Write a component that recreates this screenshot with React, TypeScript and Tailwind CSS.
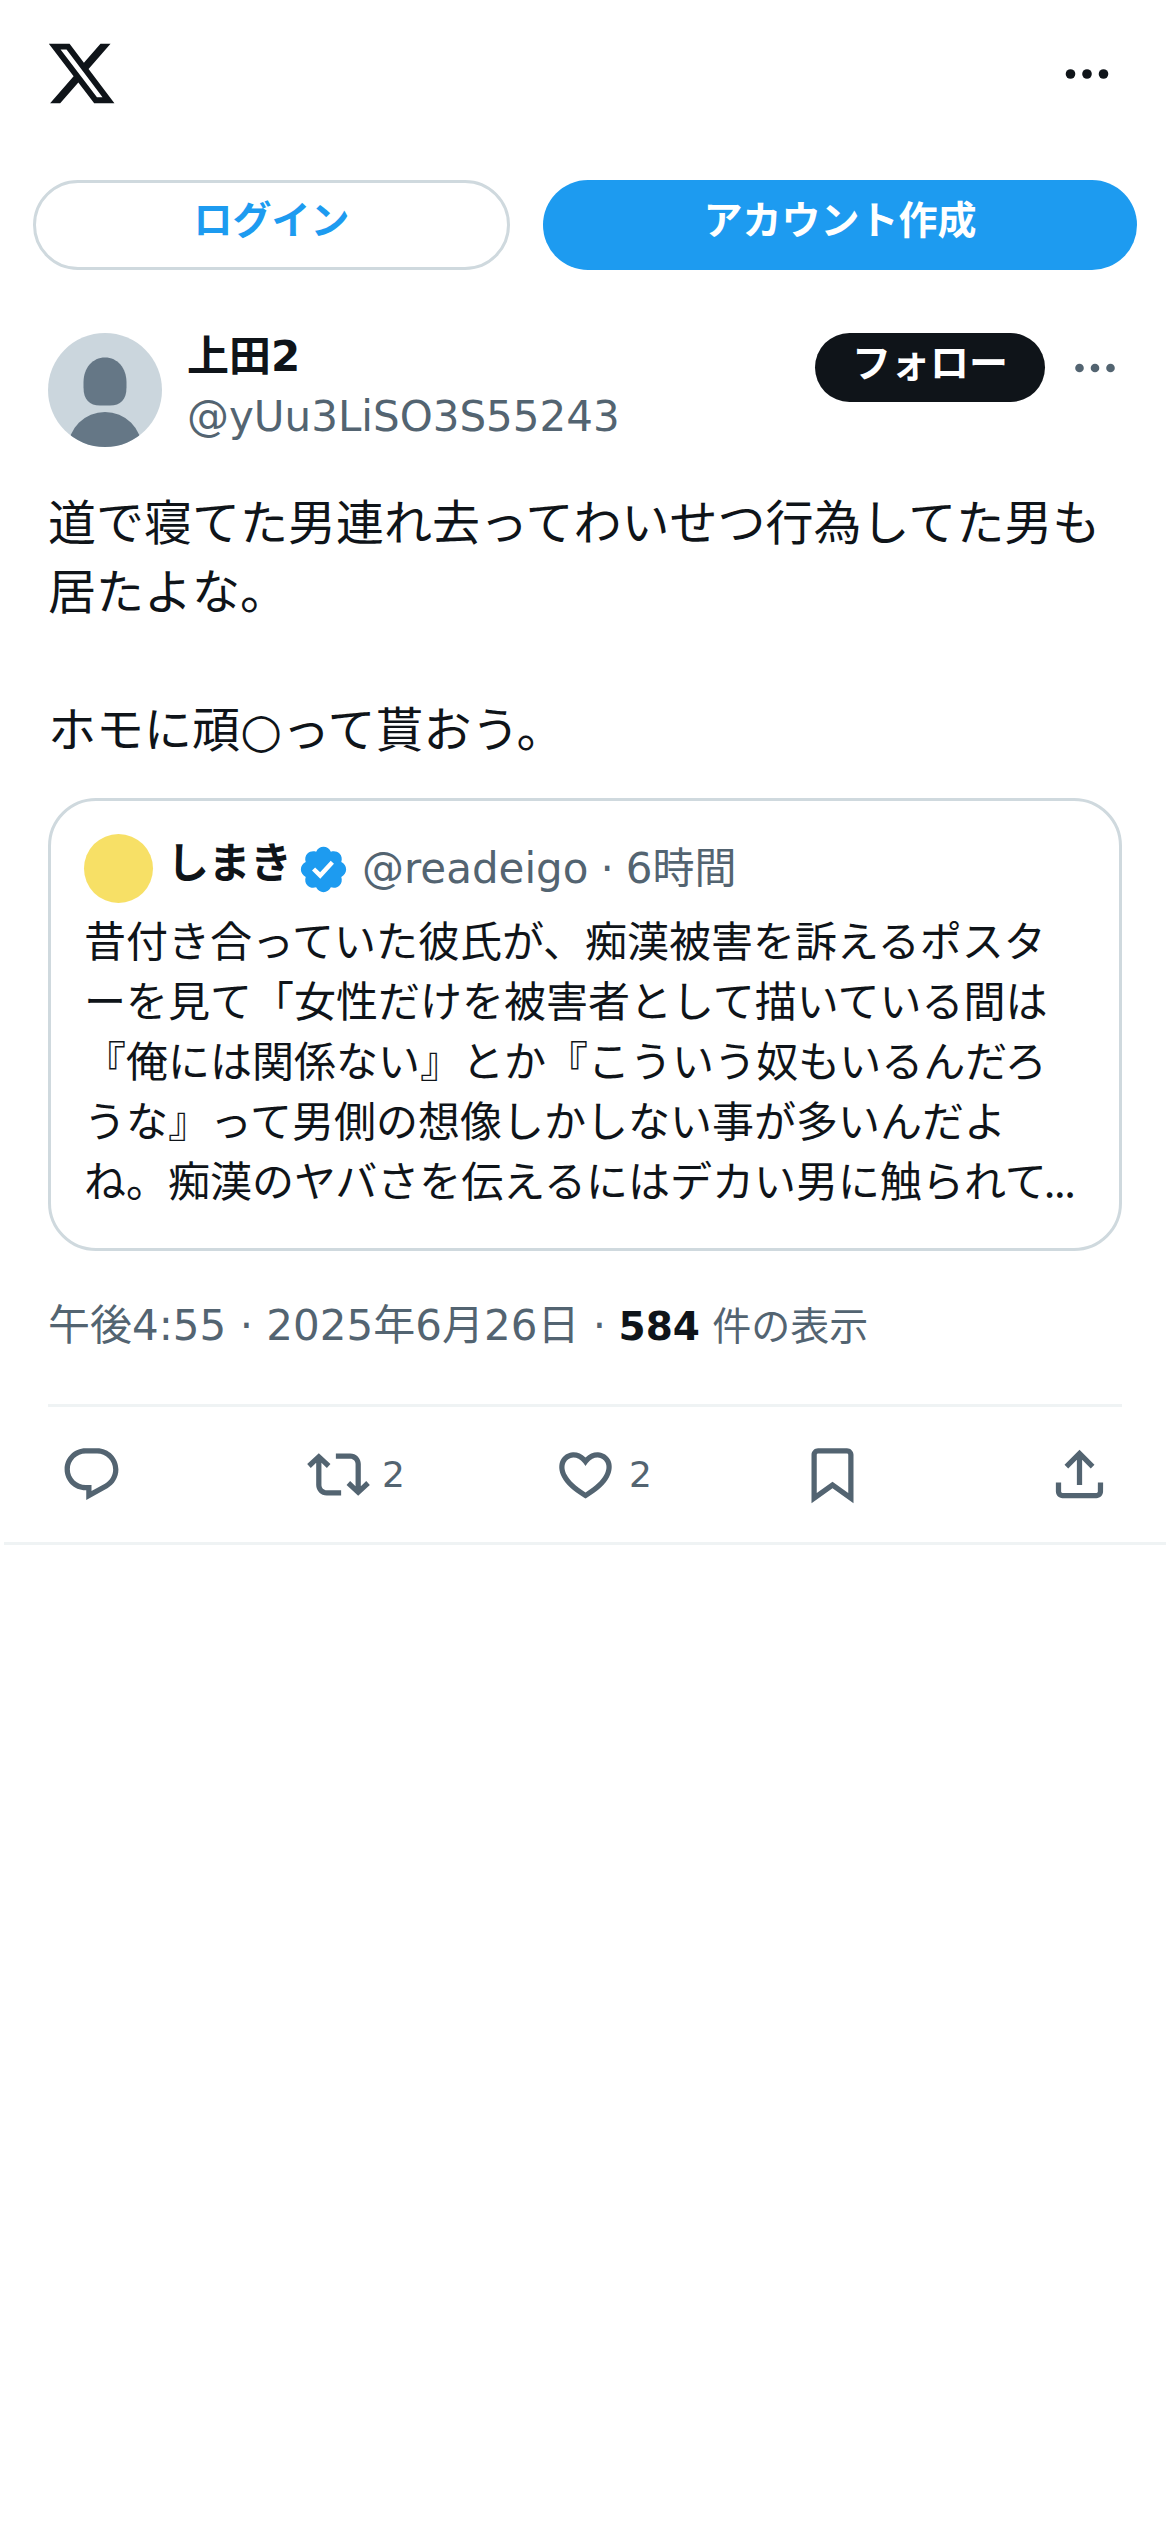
import type { ReactNode } from "react";

const ICONS = {
  x: "M18.244 2.25h3.308l-7.227 8.26 8.502 11.24H16.17l-5.214-6.817L4.99 21.75H1.68l7.73-8.835L1.254 2.25H8.08l4.713 6.231zm-1.161 17.52h1.833L7.084 4.126H5.117z",
  reply:
    "M1.751 10c0-4.42 3.584-8 8.005-8h4.366c4.49 0 8.129 3.64 8.129 8.13 0 2.96-1.607 5.68-4.196 7.11l-8.054 4.46v-3.69h-.067c-4.49.1-8.183-3.51-8.183-8.01zm8.005-6c-3.317 0-6.005 2.69-6.005 6 0 3.37 2.77 6.08 6.138 6.01l.351-.01h1.761v2.3l5.087-2.81c1.951-1.08 3.163-3.13 3.163-5.36 0-3.39-2.744-6.13-6.129-6.13H9.756z",
  repost:
    "M4.5 3.88l4.432 4.14-1.364 1.46L5.5 7.55V16c0 1.1.896 2 2 2H13v2H7.5c-2.209 0-4-1.79-4-4V7.55L1.432 9.48.068 8.02 4.5 3.88zM16.5 6H11V4h5.5c2.209 0 4 1.79 4 4v8.45l2.068-1.93 1.364 1.46-4.432 4.14-4.432-4.14 1.364-1.46 2.068 1.93V8c0-1.1-.896-2-2-2z",
  like: "M16.697 5.5c-1.222-.06-2.679.51-3.89 2.16l-.805 1.09-.806-1.09C9.984 6.01 8.526 5.44 7.304 5.5c-1.243.07-2.349.78-2.91 1.91-.552 1.12-.633 2.78.479 4.82 1.074 1.97 3.257 4.27 7.129 6.61 3.87-2.34 6.052-4.64 7.126-6.61 1.111-2.04 1.03-3.7.477-4.82-.561-1.13-1.666-1.84-2.908-1.91zm4.187 7.69c-1.351 2.48-4.001 5.12-8.379 7.67l-.503.3-.504-.3c-4.379-2.55-7.029-5.19-8.382-7.67-1.36-2.5-1.41-4.86-.514-6.67.887-1.79 2.647-2.91 4.601-3.01 1.651-.09 3.368.56 4.798 2.01 1.429-1.45 3.146-2.1 4.796-2.01 1.954.1 3.714 1.22 4.601 3.01.896 1.81.846 4.17-.514 6.67z",
  bookmark:
    "M4 4.5C4 3.12 5.119 2 6.5 2h11C18.881 2 20 3.12 20 4.5v18.44l-8-5.71-8 5.71V4.5zM6.5 4c-.276 0-.5.22-.5.5v14.56l6-4.29 6 4.29V4.5c0-.28-.224-.5-.5-.5h-11z",
  share:
    "M12 2.59l5.7 5.7-1.41 1.42L13 6.41V16h-2V6.41l-3.3 3.3-1.41-1.42L12 2.59zM21 15l-.02 3.51c0 1.38-1.12 2.49-2.5 2.49H5.5C4.11 21 3 19.88 3 18.5V15h2v3.5c0 .28.22.5.5.5h12.98c.28 0 .5-.22.5-.5L19 15h2z",
  verified:
    "M22.25 12c0-1.43-.88-2.67-2.19-3.34.46-1.39.2-2.9-.81-3.91s-2.52-1.27-3.91-.81c-.66-1.31-1.91-2.19-3.34-2.19s-2.67.88-3.33 2.19c-1.4-.46-2.91-.2-3.92.81s-1.26 2.52-.8 3.91c-1.31.67-2.2 1.91-2.2 3.34s.89 2.67 2.2 3.34c-.46 1.39-.21 2.9.8 3.91s2.52 1.26 3.91.81c.67 1.31 1.91 2.19 3.34 2.19s2.68-.88 3.34-2.19c1.39.45 2.9.2 3.91-.81s1.27-2.52.81-3.91c1.31-.67 2.19-1.91 2.19-3.34zm-11.71 4.2L6.8 12.46l1.41-1.42 2.26 2.26 4.8-5.23 1.47 1.36-6.2 6.77z",
};

type IconName = keyof typeof ICONS;

function Icon({ name, className }: { name: IconName; className: string }) {
  return (
    <svg viewBox="0 0 24 24" fill="currentColor" className={className}>
      <path d={ICONS[name]} />
    </svg>
  );
}

function Avatar() {
  return (
    <svg viewBox="0 0 114 114" className="size-[114px] shrink-0 rounded-full bg-[#cbd6dd]">
      <path
        d="M57 24.5c12.500 0 21.500 10.500 21.500 25v5c0 12-6 18-16.500 18h-10c-10.500 0-16.500-6-16.500-18v-5c0-14.500 9-25 21.500-25z"
        fill="#657786"
      />
      <circle cx="57" cy="116" r="37" fill="#657786" />
    </svg>
  );
}

function Header() {
  return (
    <header className="flex h-[147px] items-center justify-between pl-[45px] pr-[61px]">
      <Icon name="x" className="size-[73px]" />
      <svg viewBox="0 0 44 12" className="h-3 w-11" fill="#0f1419">
        <circle cx="5.500" cy="6" r="4.800" />
        <circle cx="22" cy="6" r="4.800" />
        <circle cx="38.500" cy="6" r="4.800" />
      </svg>
    </header>
  );
}

function AuthButtons() {
  return (
    <div className="mt-[33px] flex gap-[33px] px-[33px] text-[39px] font-bold leading-[76px]">
      <button type="button" className="flex h-[90px] w-[477px] justify-center rounded-full border-[3px] border-[#cfd9de] text-[#1d9bf0]">
        ログイン
      </button>
      <button type="button" className="flex h-[90px] flex-1 justify-center rounded-full bg-[#1d9bf0] pt-[3px] text-white">
        アカウント作成
      </button>
    </div>
  );
}

function Author() {
  return (
    <div className="flex px-12">
      <Avatar />
      <div className="ml-[25px] flex flex-col text-[42px]">
        <span className="h-[54px] font-bold leading-[48px]">上田2</span>
        <span className="leading-[60px] text-[#536471]">@yUu3LiSO3S55243</span>
      </div>
      <button type="button" className="ml-auto flex h-[69px] w-[230px] justify-center rounded-full bg-[#0f1419] text-[39px] font-bold leading-[61px] text-white">
        フォロー
      </button>
      <svg viewBox="0 0 42 10" className="ml-[29px] mr-[6px] mt-[30px] h-[10px] w-[42px]" fill="#536471">
        <circle cx="5.500" cy="5" r="4.300" />
        <circle cx="21" cy="5" r="4.300" />
        <circle cx="36.500" cy="5" r="4.300" />
      </svg>
    </div>
  );
}

const QUOTE_LINES = [
  "昔付き合っていた彼氏が、痴漢被害を訴えるポスタ",
  "ーを見て「女性だけを被害者として描いている間は",
  "『俺には関係ない』とか『こういう奴もいるんだろ",
  "うな』って男側の想像しかしない事が多いんだよ",
  "ね。痴漢のヤバさを伝えるにはデカい男に触られて",
];

function QuotedPost() {
  return (
    <div className="mx-12 mt-[33px] h-[453px] rounded-[48px] border-[3px] border-[#cfd9de] px-[33px] pt-[33px]">
      <div className="flex h-[69px] items-center text-[42px] leading-[69px]">
        <div className="size-[69px] rounded-full bg-[#f7e066]" />
        <span className="-mt-[10px] ml-[14px] w-[124px] whitespace-nowrap font-bold tracking-[-0.5px]">しまき</span>
        <Icon name="verified" className="ml-[6px] mt-[2px] size-[53px] text-[#1d9bf0]" />
        <div className="ml-[12px] flex gap-3 text-[#536471]">
          <span>@readeigo</span>
          <span>·</span>
          <span>6時間</span>
        </div>
      </div>
      <div className="mt-[10px] text-[42px] leading-[60px]">
        {QUOTE_LINES.map((line, i) => (
          <p key={line} className="h-[60px] whitespace-nowrap">
            {line}
            {i === QUOTE_LINES.length - 1 && (
              <span className="-ml-[3px] font-['Noto_Sans_CJK_JP',sans-serif] leading-none tracking-[-1.4px]">...</span>
            )}
          </p>
        ))}
      </div>
    </div>
  );
}

function Action({ name, children }: { name: IconName; children?: ReactNode }) {
  return (
    <button type="button" className="flex w-[247px] shrink-0 items-center gap-3 text-4xl">
      <Icon name={name} className="size-[63px]" />
      {children}
    </button>
  );
}

export default function App() {
  return (
    <div lang="ja" className="h-[2532px] w-[1170px] overflow-hidden bg-white font-['DejaVu_Sans','Noto_Sans_CJK_JP',sans-serif] text-[#0f1419]">
      <Header />
      <AuthButtons />

      <article className="mt-[63px]">
        <Author />
        <p className="mx-12 mt-[42px] h-[276px] whitespace-pre text-5xl leading-[69px]">
          {"道で寝てた男連れ去ってわいせつ行為してた男も\n居たよな。\n\nホモに頑○って貰おう。"}
        </p>
        <QuotedPost />
        <div className="mx-12 mt-[45px] h-[111px] border-b-[3px] border-[#eff3f4] text-[42px] leading-[60px] text-[#536471]">
          午後4:55 · 2025年6月26日 ·
          <span className="text-[39px]">
            {" "}
            <b className="text-[#0f1419]">584</b> 件の表示
          </span>
        </div>
      </article>

      <div className="mx-1 flex h-[138px] items-center overflow-hidden border-b-[3px] border-[#eff3f4] pl-[56px] text-[#536471]">
        <Action name="reply" />
        <Action name="repost">2</Action>
        <Action name="like">2</Action>
        <Action name="bookmark" />
        <Action name="share" />
      </div>
    </div>
  );
}
